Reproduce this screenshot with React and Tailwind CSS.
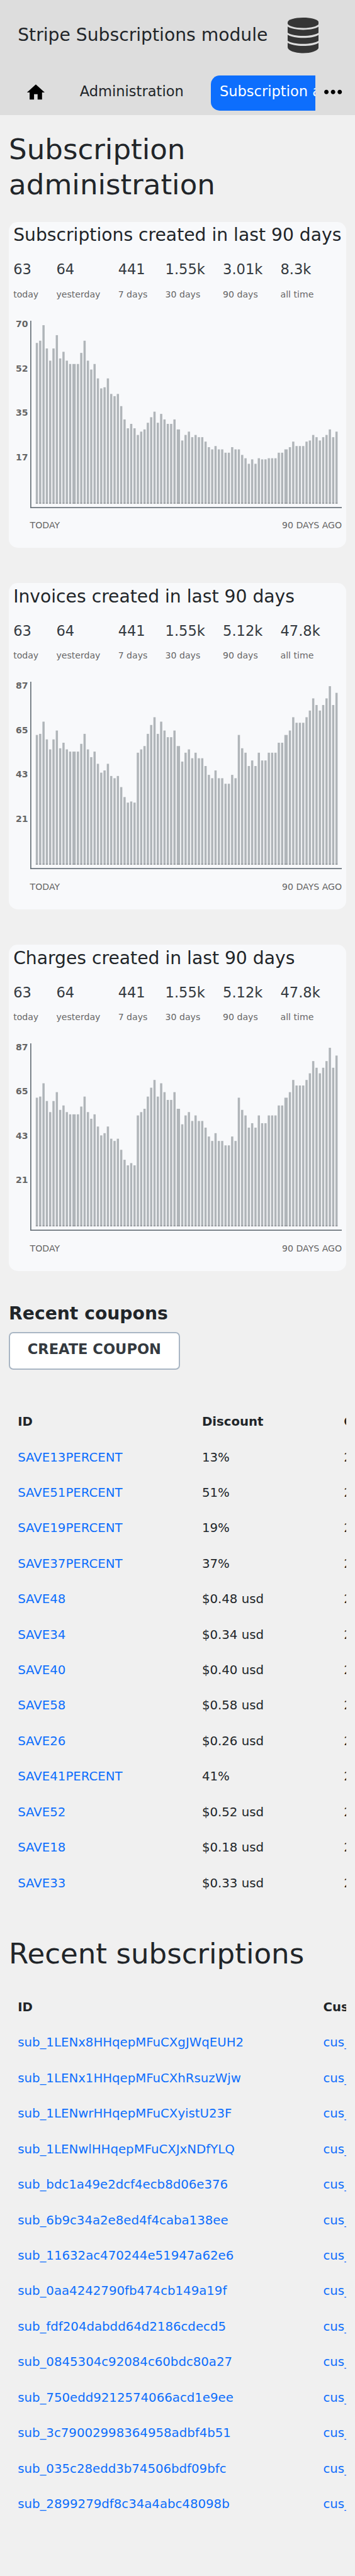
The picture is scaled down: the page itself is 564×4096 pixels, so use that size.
import React from "react";
import { MdHome, MdMoreHoriz } from "react-icons/md";

const SUBSCRIPTION_BARS = [
  290, 294, 322, 280, 258, 280, 304, 262, 274, 258, 252, 252, 252, 272, 294, 258, 242, 252, 226, 208,
  210, 226, 198, 194, 198, 176, 152, 136, 144, 136, 124, 130, 134, 146, 156, 166, 146, 162, 152, 144,
  144, 152, 134, 114, 124, 130, 120, 124, 120, 120, 112, 102, 98, 104, 98, 98, 92, 92, 102, 98, 98, 88,
  82, 72, 80, 72, 82, 80, 80, 82, 82, 82, 92, 92, 98, 102, 112, 104, 104, 104, 112, 114, 124, 120, 114,
  120, 124, 134, 120, 130,
];

const INVOICE_BARS = [
  234, 236, 258, 226, 208, 226, 242, 210, 220, 208, 204, 204, 204, 218, 236, 208, 194, 204, 182, 166,
  170, 182, 160, 156, 160, 140, 122, 112, 114, 112, 202, 208, 214, 236, 252, 266, 236, 258, 242, 230,
  230, 242, 214, 186, 202, 208, 192, 202, 192, 192, 178, 162, 156, 170, 156, 156, 146, 146, 162, 156,
  234, 210, 202, 178, 188, 178, 202, 188, 188, 202, 202, 202, 220, 220, 234, 242, 266, 256, 256, 256,
  266, 278, 300, 288, 278, 288, 300, 322, 288, 310,
];

const CHARGE_BARS = [
  232, 234, 258, 226, 206, 226, 242, 210, 218, 206, 202, 202, 202, 216, 234, 206, 194, 202, 180, 164,
  168, 180, 158, 154, 158, 138, 120, 110, 114, 110, 200, 206, 212, 234, 250, 264, 234, 258, 242, 228,
  228, 242, 212, 184, 200, 206, 190, 200, 190, 190, 178, 162, 154, 168, 154, 154, 146, 146, 162, 154,
  232, 210, 200, 178, 186, 178, 200, 186, 186, 200, 200, 200, 218, 218, 232, 242, 264, 254, 254, 254,
  264, 276, 298, 286, 276, 286, 298, 322, 286, 308,
];

const WIDE_DAYS = [11, 42, 74];

const stats = (quarter, total) => [
  ["63", "today"],
  ["64", "yesterday"],
  ["441", "7 days"],
  ["1.55k", "30 days"],
  [quarter, "90 days"],
  [total, "all time"],
];

const CHARTS = [
  { title: "Subscriptions created in last 90 days", stats: stats("3.01k", "8.3k"), ticks: [70, 52, 35, 17], bars: SUBSCRIPTION_BARS },
  { title: "Invoices created in last 90 days", stats: stats("5.12k", "47.8k"), ticks: [87, 65, 43, 21], bars: INVOICE_BARS },
  { title: "Charges created in last 90 days", stats: stats("5.12k", "47.8k"), ticks: [87, 65, 43, 21], bars: CHARGE_BARS },
];

const COUPONS = [
  ["SAVE13PERCENT", "13%"],
  ["SAVE51PERCENT", "51%"],
  ["SAVE19PERCENT", "19%"],
  ["SAVE37PERCENT", "37%"],
  ["SAVE48", "$0.48 usd"],
  ["SAVE34", "$0.34 usd"],
  ["SAVE40", "$0.40 usd"],
  ["SAVE58", "$0.58 usd"],
  ["SAVE26", "$0.26 usd"],
  ["SAVE41PERCENT", "41%"],
  ["SAVE52", "$0.52 usd"],
  ["SAVE18", "$0.18 usd"],
  ["SAVE33", "$0.33 usd"],
];

const SUBSCRIPTIONS = [
  "sub_1LENx8HHqepMFuCXgJWqEUH2",
  "sub_1LENx1HHqepMFuCXhRsuzWjw",
  "sub_1LENwrHHqepMFuCXyistU23F",
  "sub_1LENwlHHqepMFuCXJxNDfYLQ",
  "sub_bdc1a49e2dcf4ecb8d06e376",
  "sub_6b9c34a2e8ed4f4caba138ee",
  "sub_11632ac470244e51947a62e6",
  "sub_0aa4242790fb474cb149a19f",
  "sub_fdf204dabdd64d2186cdecd5",
  "sub_0845304c92084c60bdc80a27",
  "sub_750edd9212574066acd1e9ee",
  "sub_3c79002998364958adbf4b51",
  "sub_035c28edd3b74506bdf09bfc",
  "sub_2899279df8c34a4abc48098b",
];

function DatabaseIcon() {
  return (
    <svg viewBox="0 0 56 64" className="h-16 w-14 fill-[#363636]">
      <path d="M0 10.5V8.5C0 3.8 12.5 0 28 0S56 3.8 56 8.5V10.5C56 15 43.5 18.7 28 18.7S0 15 0 10.5Z" />
      <path d="M0 16.3C6 20.2 16.5 22 28 22S50 20.2 56 16.3V27.2C51 30.8 40 33 28 33S5 30.8 0 27.2Z" />
      <path d="M0 30.9C6 34.8 16.5 36.6 28 36.6S50 34.8 56 30.9V41.6C51 45.2 40 47.4 28 47.4S5 45.2 0 41.6Z" />
      <path d="M0 45.3C6 49.2 16.5 51 28 51S50 49.2 56 45.3V53C56 59.3 43.5 64 28 64S0 59.3 0 53Z" />
    </svg>
  );
}

function Header() {
  return (
    <header className="h-[208px] bg-[#ddd]">
      <div className="flex h-32 items-center pl-8">
        <h1 className="w-[486px] whitespace-nowrap text-[32px] leading-[62px]">Stripe Subscriptions module</h1>
        <DatabaseIcon />
      </div>
      <nav className="flex h-20 items-center">
        <a className="ml-[45.4px] mr-[60px] block pb-[2px]">
          <MdHome className="size-[38.4px] text-black" />
        </a>
        <a className="block w-[236px] pb-1.5 text-[25.6px] leading-[58px]">Administration</a>
        <div className="w-[188.4px] overflow-hidden">
          <a className="block h-16 w-[360px] whitespace-nowrap rounded-2xl bg-[#0d6efd] pl-4 text-[25.6px] leading-[58px] text-white">
            Subscription administration
          </a>
        </div>
        <button className="ml-2 block pb-1">
          <MdMoreHoriz className="size-12 text-black" />
        </button>
      </nav>
    </header>
  );
}

function BarChart({ bars }) {
  let x = 10;
  const columns = bars.map((height, day) => {
    const width = WIDE_DAYS.includes(day) ? 6 : 4;
    const column = { x, width, height };
    x += width + 2;
    return column;
  });
  return (
    <svg viewBox="0 0 562 338" className="h-[338px] w-[562px]">
      <path d="M0 0H2V336H562V338H0Z" fill="#6c757d" />
      {columns.map((c) => (
        <g key={c.x}>
          <rect x={c.x} y={330 - c.height} width={c.width} height={c.height - 2} fill="#b0b5b9" />
          <rect x={c.x} y={328} width={c.width} height={2} fill="#8f9498" />
        </g>
      ))}
    </svg>
  );
}

function ChartCard({ title, stats, ticks, bars }) {
  return (
    <section className="h-[588px] rounded-2xl bg-[#f8f9fb] px-2 pt-[4px]">
      <h2 className="whitespace-nowrap text-[32px] leading-10">{title}</h2>
      <ul className="mt-[26px] flex gap-8">
        {stats.map(([value, label]) => (
          <li key={label}>
            <div className="text-[25.6px] leading-8 text-[#343a40]">{value}</div>
            <div className="mt-[17px] text-base leading-6 text-[#666]">{label}</div>
          </li>
        ))}
      </ul>
      <div className="mt-[35px] flex h-[338px]">
        <ol className="w-[30px] pr-[3.5px] pt-[0.8px] text-right text-base font-bold leading-3 text-[#666]">
          {ticks.map((tick) => (
            <li key={tick} className="h-20">
              {tick}
            </li>
          ))}
        </ol>
        <BarChart bars={bars} />
      </div>
      <div className="mt-[19.8px] flex justify-between pl-[30px] text-base leading-6 text-[#666]">
        <span>TODAY</span>
        <span>90 DAYS AGO</span>
      </div>
    </section>
  );
}

export default function App() {
  return (
    <div className="h-[4646px] w-[640px] overflow-hidden bg-[#f0f0f0] font-['DejaVu_Sans',sans-serif] text-[#212529] [zoom:0.88162]">
      <Header />
      <main className="px-4 pt-[30px]">
        <h1 className="text-[51.2px] leading-[64px]">
          Subscription
          <br />
          administration
        </h1>
        <div className="mt-[34px] flex flex-col gap-16">
          {CHARTS.map((chart) => (
            <ChartCard key={chart.title} {...chart} />
          ))}
        </div>

        <h2 className="mt-[57px] text-[32px] font-bold leading-10">Recent coupons</h2>
        <button className="mt-[13px] block h-[68px] w-[308px] whitespace-nowrap rounded-lg border-[2.3px] border-[#a9b6c4] bg-white pb-1.5 text-[25.6px] font-bold leading-[58px] text-[#343a40]">
          CREATE COUPON
        </button>

        <div className="mt-[63px] overflow-hidden whitespace-nowrap pl-4 text-[22.4px] leading-[64px]">
          <div className="grid grid-cols-[332px_255.5px_200px] font-bold">
            <span>ID</span>
            <span>Discount</span>
            <span>Created</span>
          </div>
          {COUPONS.map(([id, discount]) => (
            <div key={id} className="grid grid-cols-[332px_255.5px_200px]">
              <a className="text-[#0d6efd]">{id}</a>
              <span>{discount}</span>
              <span>2022</span>
            </div>
          ))}
        </div>

        <h1 className="mt-[64px] text-[51.2px] leading-[64px]">Recent subscriptions</h1>
        <div className="mt-8 overflow-hidden whitespace-nowrap pl-4 text-[22.4px] leading-[64px]">
          <div className="grid grid-cols-[550.5px_200px] font-bold">
            <span>ID</span>
            <span>Customer</span>
          </div>
          {SUBSCRIPTIONS.map((id) => (
            <div key={id} className="grid grid-cols-[550.5px_200px] text-[#0d6efd]">
              <a>{id}</a>
              <a>cus_</a>
            </div>
          ))}
        </div>
      </main>
    </div>
  );
}
